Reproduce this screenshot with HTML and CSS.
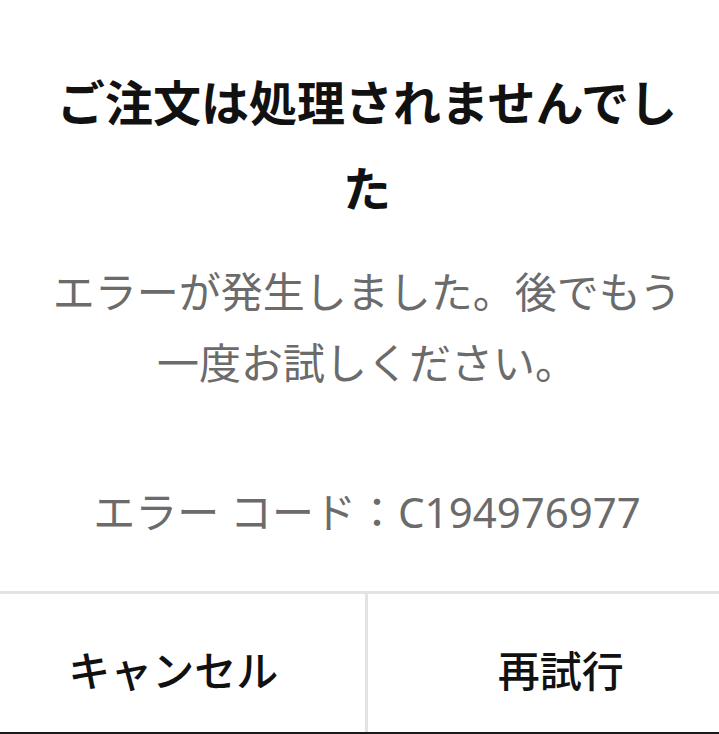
FILE: index.html
```html
<!DOCTYPE html>
<html lang="ja">
<head>
  <meta charset="UTF-8">
  <meta name="viewport" content="width=device-width, initial-scale=1.0">
  <title>ご注文は処理されませんでした</title>
  <link rel="stylesheet" href="styles.css">
</head>
<body>
  <div class="dialog">
    <div class="dialog-body">
      <h1 class="dialog-title">ご注文は処理されませんでした</h1>
      <p class="dialog-message">エラーが発生しました。後でもう一度お試しください。</p>
      <p class="dialog-code">エラー コード：C194976977</p>
    </div>
    <div class="dialog-actions">
      <button class="action action-cancel">キャンセル</button>
      <button class="action action-retry">再試行</button>
    </div>
  </div>
</body>
</html>
```

FILE: styles.css
```css
html, body {
  margin: 0;
  padding: 0;
  background: #fff;
  overflow: hidden;
}
body {
  font-family: 'Noto Sans', 'Noto Sans CJK JP', sans-serif;
  color: #1a1a1a;
}
.dialog {
  width: 734px;
  height: 734px;
  display: flex;
  flex-direction: column;
  border-bottom: 2px solid #1a1a1a;
  box-sizing: border-box;
}
.dialog-body {
  flex: 1;
  padding: 60px 38px 0;
  text-align: center;
}
.dialog-title {
  font-size: 48px;
  font-weight: 700;
  line-height: 86px;
  margin: 0;
  color: #111;
}
.dialog-message {
  font-size: 42px;
  line-height: 71px;
  margin: 24px 0 0;
  color: #6b6b6b;
}
.dialog-code {
  font-size: 42px;
  line-height: 71px;
  margin: 78px 0 0;
  color: #6b6b6b;
}
.dialog-actions {
  display: flex;
  border-top: 3px solid #e3e3e3;
  height: 138px;
}
.action {
  flex: 1;
  background: #fff;
  border: none;
  font-family: inherit;
  font-size: 42px;
  font-weight: 500;
  color: #111;
  padding: 10px 0 0;
}
.action-cancel {
  padding-right: 18px;
}
.action-retry {
  border-left: 3px solid #e3e3e3;
  padding-left: 20px;
}
```
